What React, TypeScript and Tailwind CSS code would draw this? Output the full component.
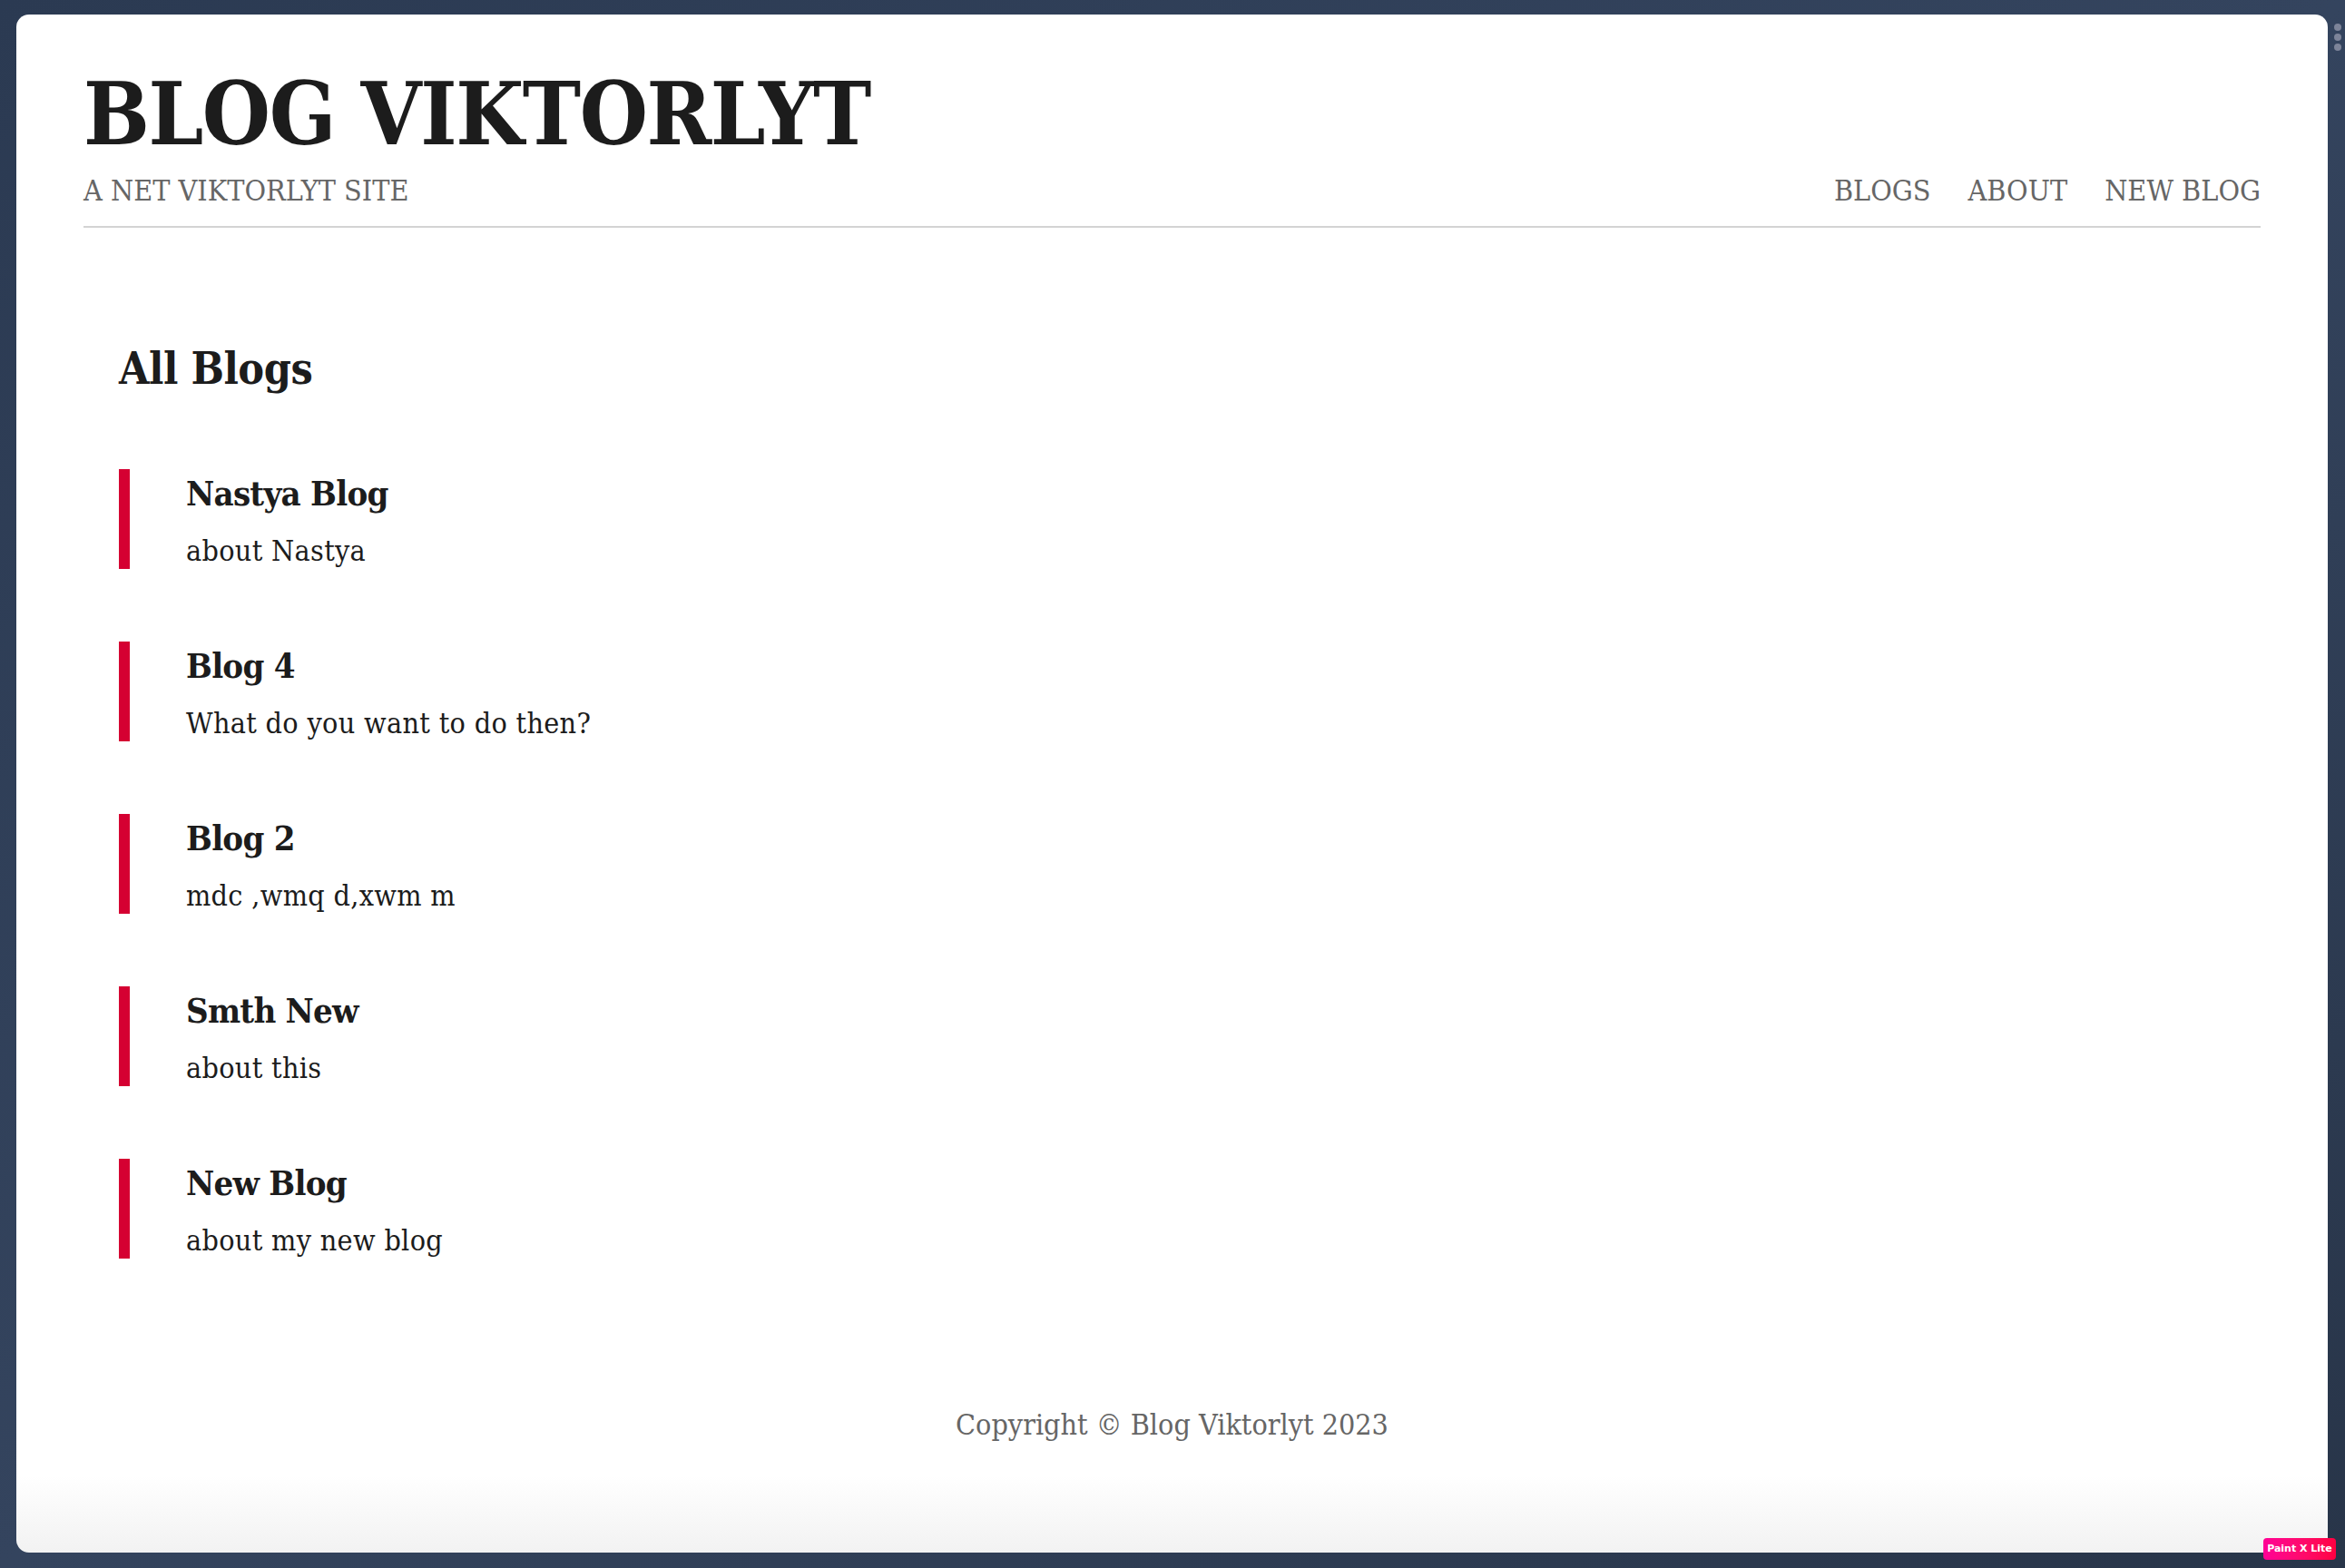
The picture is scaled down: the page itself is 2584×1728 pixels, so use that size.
import React from "react";

interface IBlog {
    title: string
    about: string
}

const blogs: IBlog[] = [
    { title: "Nastya Blog", about: "about Nastya" },
    { title: "Blog 4", about: "What do you want to do then?" },
    { title: "Blog 2", about: "mdc ,wmq d,xwm m" },
    { title: "Smth New", about: "about this" },
    { title: "New Blog", about: "about my new blog" },
];

const serif = "font-['DejaVu_Serif_Condensed','DejaVu_Serif',serif] font-stretch-condensed";

const BlogItem: React.FC<{ blog: IBlog }> = ({ blog }) => {
    return (
        <div className="h-[110px] border-l-[12px] border-[#d50032] pl-[62px] flex flex-col">
            <span className="mt-[3px] text-[38px] leading-[48px] font-bold tracking-[-0.02em] text-[#1c1c1c]">{blog.title}</span>
            <span className="mt-[17px] text-[32px] leading-[44px] tracking-[0.01em] text-[#1c1c1c]">{blog.about}</span>
        </div>
    )
}

const App: React.FC = () => {
    return (
        <div className="relative h-[1728px] w-full bg-gradient-to-br from-[#2b3a52] via-[#34445e] to-[#283549] pt-[16px] pl-[18px] pr-[19px] pb-[17px]">
            <div className={`${serif} h-full bg-gradient-to-b from-white from-[95%] to-[#f2f2f2] rounded-[14px] px-[74px] flex flex-col`}>
                <header className="pt-[62px] border-b-2 border-[#d3d3d3] pb-[15px]">
                    <h1 className="text-[96px] leading-none font-bold tracking-[-0.015em] text-[#1c1c1c]">BLOG VIKTORLYT</h1>
                    <div className="mt-[12px] flex flex-row justify-between items-end text-[32px] leading-[48px] text-[#666666]">
                        <span>A NET VIKTORLYT SITE</span>
                        <nav className="flex flex-row gap-[41px]">
                            <a href="#">BLOGS</a>
                            <a href="#">ABOUT</a>
                            <a href="#">NEW BLOG</a>
                        </nav>
                    </div>
                </header>
                <main className="px-[39px] pt-[125px]">
                    <h2 className="text-[48px] leading-[60px] font-bold tracking-[-0.01em] text-[#1c1c1c]">All Blogs</h2>
                    <div className="mt-[81px] flex flex-col gap-[80px]">
                        {blogs.map((blog) => (
                            <BlogItem key={blog.title} blog={blog}/>
                        ))}
                    </div>
                </main>
                <footer className="mt-[159px] text-center text-[32px] leading-[48px] text-[#666666]">
                    Copyright © Blog Viktorlyt 2023
                </footer>
            </div>
            <div className="absolute right-[4px] top-[26px] flex flex-col gap-[3px]">
                <span className="w-[8px] h-[8px] rounded-full bg-[#7d8499]"/>
                <span className="w-[8px] h-[8px] rounded-full bg-[#7d8499]"/>
                <span className="w-[8px] h-[8px] rounded-full bg-[#7d8499]"/>
            </div>
            <div className="absolute right-[10px] bottom-[9px] w-[80px] h-[24px] rounded-[4px] bg-gradient-to-r from-[#ff0095] to-[#ff0040] flex items-center justify-center font-['DejaVu_Sans',sans-serif] font-bold text-[11px] text-white">
                Paint X Lite
            </div>
        </div>
    )
}

export default App
